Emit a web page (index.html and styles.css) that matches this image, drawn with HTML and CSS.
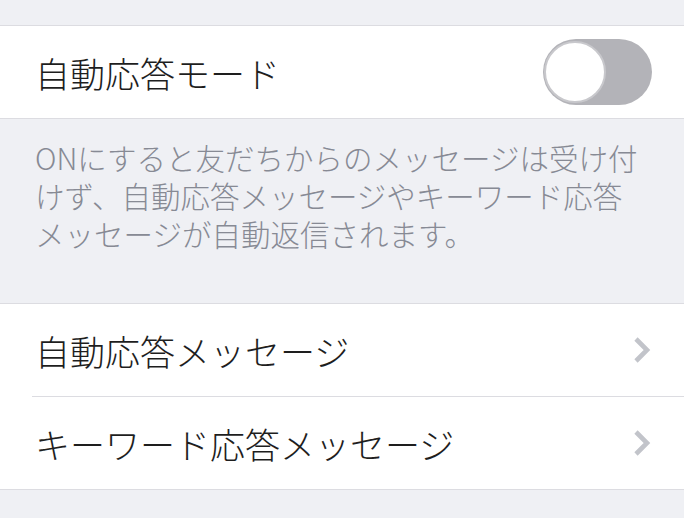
FILE: index.html
```html
<!DOCTYPE html>
<html lang="ja">
<head>
<meta name="viewport" content="width=device-width, initial-scale=1.0">
<link rel="stylesheet" href="styles.css">
</head>
<body>

<div class="spacer"></div>

<div class="group">
  <div class="row">
    <span class="label">自動応答モード</span>
    <div class="switch"><div class="knob"></div></div>
  </div>
</div>

<div class="footer">
  ONにすると友だちからのメッセージは受け付けず、自動応答メッセージやキーワード応答メッセージが自動返信されます。
</div>

<div class="group">
  <div class="row">
    <span class="label">自動応答メッセージ</span>
    <svg class="chevron" width="18" height="26" viewBox="0 0 18 26">
      <path d="M3 2 L14 13 L3 24" fill="none" stroke="#c2c4ca" stroke-width="4.6"/>
    </svg>
  </div>
  <div class="sep"></div>
  <div class="row">
    <span class="label">キーワード応答メッセージ</span>
    <svg class="chevron" width="18" height="26" viewBox="0 0 18 26">
      <path d="M3 2 L14 13 L3 24" fill="none" stroke="#c2c4ca" stroke-width="4.6"/>
    </svg>
  </div>
</div>

<div class="bottom"></div>

</body>
</html>
```

FILE: styles.css
```css
body {
  margin: 0;
  background-color: #eff0f4;
  font-family: "Noto Sans CJK JP", "Noto Sans", sans-serif;
  font-weight: 300;
}

.spacer {
  height: 25px;
}

.group {
  background-color: #fff;
  border-top: 1px solid #dcdce1;
  border-bottom: 1px solid #dcdce1;
}

.row {
  height: 92px;
  display: flex;
  align-items: center;
  justify-content: space-between;
  padding: 0 32px 0 35px;
}

.label {
  font-size: 35px;
  color: #1e1e1e;
}

.sep {
  height: 1px;
  margin-left: 32px;
  background-color: #dcdce1;
}

.chevron {
  display: block;
  margin-right: 1px;
}

/* off-state switch */
.switch {
  position: relative;
  width: 109px;
  height: 66px;
  border-radius: 33px;
  background-color: #b3b3b8;
}

.switch .knob {
  position: absolute;
  left: 1px;
  top: 2px;
  width: 58px;
  height: 58px;
  border-radius: 50%;
  background-color: #fff;
  border: 2px solid #c8c8cc;
}

.footer {
  height: 184px;
  box-sizing: border-box;
  padding: 19px 37px 0 35px;
  font-size: 29.5px;
  line-height: 38px;
  color: #878a94;
}

.bottom {
  height: 30px;
}
```
